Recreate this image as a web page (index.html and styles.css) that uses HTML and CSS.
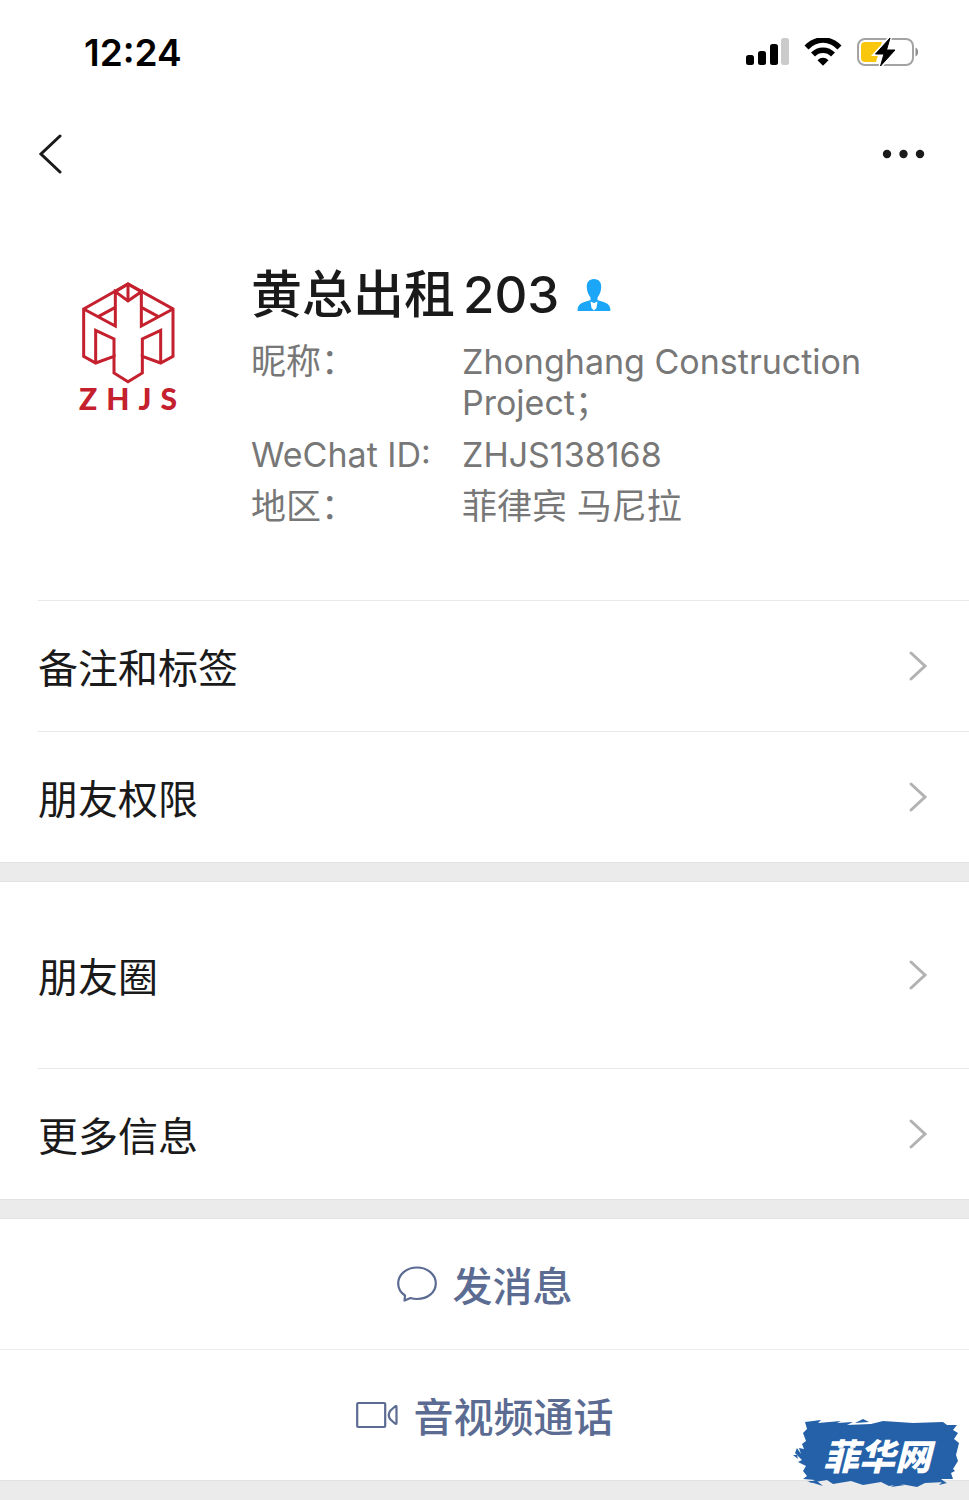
FILE: index.html
```html
<!DOCTYPE html>
<html lang="zh-CN">
<head>
    <meta charset="UTF-8">
    <meta name="viewport" content="width=device-width, initial-scale=1.0">
    <title>黄总出租203</title>
    <link rel="stylesheet" href="styles.css">
</head>
<body>
    <div class="page">
        <div class="status-bar">
            <span class="time">12:24</span>
            <div class="status-icons">
                <svg width="43" height="28" viewBox="0 0 43 28">
                    <rect x="0" y="17" width="8" height="10" rx="2.5"/>
                    <rect x="12" y="13" width="8" height="14" rx="2.5"/>
                    <rect x="24" y="6" width="8" height="21" rx="2.5"/>
                    <rect x="35" y="0" width="8" height="27" rx="2.5" fill="#cbcbcb"/>
                </svg>
                <svg width="38" height="28" viewBox="0 0 38 28">
                    <path d="M2.5 9.5C12 -.5 26 -.5 35.500 9.500" fill="none" stroke="#000" stroke-width="5.500"/>
                    <path d="M9 16.500C14.500 10.800 23.500 10.800 29 16.500" fill="none" stroke="#000" stroke-width="5.500"/>
                    <path d="M13.500 22.300C16.800 19 21.200 19 24.500 22.300L19 27.800Z"/>
                </svg>
                <svg width="62" height="30" viewBox="0 0 62 30">
                    <rect x="1" y="2" width="55" height="26" rx="7" fill="none" stroke="#a3a3a3" stroke-width="2"/>
                    <path d="M58.500 10.500C62 12 62 18 58.500 19.500Z" fill="#8f8f8f"/>
                    <path d="M8 5H25L19 25H8Q4 25 4 21V9Q4 5 8 5Z" fill="#f9c80e"/>
                    <path d="M33 1L18.500 17H27L23.500 29L38 13H29.500Z" stroke="#fff" stroke-width="4"/>
                    <path d="M33 1L18.500 17H27L23.500 29L38 13H29.500Z" stroke="#000" stroke-linejoin="round"/>
                </svg>
            </div>
        </div>

        <header class="nav">
            <button class="icon-button" aria-label="返回">
                <svg width="24" height="42" viewBox="0 0 24 42">
                    <path d="M22 3L3 21L22 39" fill="none" stroke="#1a1a1a" stroke-width="3" stroke-linecap="round"/>
                </svg>
            </button>
            <button class="icon-button" aria-label="更多">
                <svg width="44" height="12" viewBox="0 0 44 12">
                    <circle cx="5" cy="6" r="4.200" fill="#1a1a1a"/>
                    <circle cx="21.500" cy="6" r="4.200" fill="#1a1a1a"/>
                    <circle cx="38" cy="6" r="4.200" fill="#1a1a1a"/>
                </svg>
            </button>
        </header>

        <section class="profile">
            <div class="avatar">
                <svg width="100" height="104" viewBox="56 64 300 312">
                    <g fill="none" stroke="#c4202e" stroke-width="9">
                        <path d="M73 148L206 73L341 148V290L304 310L249 290V340L206 366L164 340V290L109 310L73 290Z"/>
                        <path d="M73 148L168 199V96L206 124L246 96V199L341 148"/>
                        <path d="M206 73V124M168 96L206 73L246 96"/>
                        <path d="M118 170L168 143M296 170L246 143"/>
                        <path d="M109 310V212L164 238V292M304 310V212L249 238V292"/>
                    </g>
                </svg>
                <div class="logo-text"><span>Z</span><span>H</span><span>J</span><span>S</span></div>
            </div>
            <div class="info">
                <h1 class="name">
                    <span>黄总出租</span>
                    <span>203</span>
                    <svg class="person" width="34" height="34" viewBox="0 0 34 34">
                        <path d="M17 1C22 1 24.500 4.500 24.200 9.500C24 14 22 17.500 20.500 19.500V22C25 24 33 24 33.500 32Q33.500 33 32.500 33H1.500Q.5 33 .5 32C1 24 9 24 13.500 22V19.500C12 17.500 10 14 9.800 9.500C9.500 4.500 12 1 17 1Z" fill="#1ba6f8"/>
                        <path d="M13.500 23.500L17 25L20.500 23.500L19.500 30L17 32.500L14.500 30Z" fill="#fff"/>
                    </svg>
                </h1>
                <dl class="details">
                    <dt class="zh">昵称：</dt>
                    <dd>Zhonghang Construction Project；</dd>
                    <dt>WeChat ID:</dt>
                    <dd>ZHJS138168</dd>
                    <dt class="zh">地区：</dt>
                    <dd class="zh">菲律宾 马尼拉</dd>
                </dl>
            </div>
        </section>

        <nav class="menu">
            <a class="row" href="#">
                <span>备注和标签</span>
                <svg width="20" height="34" viewBox="0 0 20 34"><path d="M3 4L17 17L3 30"/></svg>
            </a>
            <a class="row" href="#">
                <span>朋友权限</span>
                <svg width="20" height="34" viewBox="0 0 20 34"><path d="M3 4L17 17L3 30"/></svg>
            </a>
        </nav>

        <nav class="menu second">
            <a class="row tall" href="#">
                <span>朋友圈</span>
                <svg width="20" height="34" viewBox="0 0 20 34"><path d="M3 4L17 17L3 30"/></svg>
            </a>
            <a class="row" href="#">
                <span>更多信息</span>
                <svg width="20" height="34" viewBox="0 0 20 34"><path d="M3 4L17 17L3 30"/></svg>
            </a>
        </nav>

        <div class="actions">
            <button class="action">
                <svg width="40" height="38" viewBox="0 0 40 38">
                    <path d="M8 30.500C3.500 27.500 1.200 23.500 1.200 18.500C1.200 9.500 9.500 2.500 20 2.500S38.800 9.500 38.800 18.500S30.500 34 20 34C17.500 34 15.500 33.700 13.500 33L7.500 35.500Z" fill="none" stroke="#5b6b92" stroke-width="2.200" stroke-linejoin="round"/>
                </svg>
                <span>发消息</span>
            </button>
            <button class="action video">
                <svg width="42" height="28" viewBox="0 0 42 28">
                    <g fill="none" stroke="#5b6b92" stroke-width="2.200" stroke-linejoin="round">
                        <rect x="1.200" y="2" width="28" height="24" rx="1"/>
                        <path d="M40.500 6V22C40.500 23 39.800 23 39 22.500L34.500 18.500Q31 14 34.500 9.500L39 5.500C39.800 5 40.500 5 40.500 6Z"/>
                    </g>
                </svg>
                <span>音视频通话</span>
            </button>
        </div>

        <div class="watermark">
            <svg class="brush" viewBox="0 0 168 70" preserveAspectRatio="none">
                <path d="M12 3L28 1L25 4L48 2L44 4L60 3L54 6L78 5L90 2L120 4L150 3L154 6L164 6L160 11L165 14L161 20L166 24L163 36L165 42L160 50L162 52L158 54L160 60L148 60L152 63L132 64L124 68L108 65L96 67L88 63L70 66L58 62L40 65L34 61L16 64L22 61L10 60L14 57L10 52L13 47L5 43L9 41L2 34L4 29L8 35L6 29L11 30L9 25L13 22L10 14L14 10Z" fill="#2461a8"/>
                <path d="M14 62L30 67L24 62M70 0L76 3L62 4M98 68L112 66L104 64M154 64L146 66L150 62M0 36L5 40L4 36" fill="#2461a8"/>
            </svg>
            <span>菲华网</span>
        </div>
    </div>
</body>
</html>
```
FILE: styles.css
```css
* {
    box-sizing: border-box;
}

body {
    margin: 0;
    background-color: #ebebeb;
    color: #1a1a1a;
    font-family: Inter, "Noto Sans CJK SC", sans-serif;
}

svg {
    display: block;
    flex-shrink: 0;
}

button {
    border: none;
    background: none;
    padding: 0;
    font-family: inherit;
    cursor: pointer;
}

.page {
    position: relative;
    min-height: 100vh;
}

.status-bar {
    display: flex;
    justify-content: space-between;
    align-items: center;
    height: 104px;
    padding: 0 50px 0 84px;
    background-color: #fff;
    color: #000;
}

.time {
    font-size: 37px;
    font-weight: 600;
}

.status-icons {
    display: flex;
    align-items: center;
    gap: 15px;
}

.nav {
    display: flex;
    justify-content: space-between;
    align-items: center;
    height: 100px;
    padding: 0 43px 0 38px;
    background-color: #fff;
}

.profile {
    display: flex;
    gap: 33px;
    padding: 53px 60px 73px 38px;
    background-color: #fff;
}

.avatar {
    display: flex;
    flex-direction: column;
    align-items: center;
    flex-shrink: 0;
    width: 180px;
    height: 180px;
    padding-top: 24px;
}

.logo-text {
    display: flex;
    justify-content: space-between;
    width: 98px;
    color: #c4202e;
    font-family: Lato, sans-serif;
    font-size: 30px;
    font-weight: 900;
    line-height: 26px;
}

.info {
    flex: 1;
}

.name {
    display: flex;
    align-items: center;
    gap: 8px;
    margin: 0 0 8px;
    font-size: 51px;
    font-weight: 500;
    line-height: 76px;
}

.person {
    margin-left: 10px;
}

.details {
    display: grid;
    grid-template-columns: 178px 1fr;
    gap: 11px 33px;
    margin: 0;
    color: #777;
    font-size: 34px;
    line-height: 41px;
}

.details dt {
    white-space: nowrap;
}

.details dd {
    margin: 0;
}

.details .zh {
    font-size: 35px;
}

.menu {
    padding-left: 38px;
    background-color: #fff;
    border-bottom: 1px solid #e2e2e2;
}

.row {
    display: flex;
    justify-content: space-between;
    align-items: center;
    height: 131px;
    padding-right: 41px;
    border-top: 1px solid #e8e8e8;
    color: #1a1a1a;
    font-size: 40px;
    text-decoration: none;
}

.row path {
    fill: none;
    stroke: #b2b2b2;
    stroke-width: 3;
    stroke-linecap: round;
}

.second {
    margin-top: 18px;
    border-top: 1px solid #e2e2e2;
}

.tall {
    height: 186px;
    border-top: none;
}

.actions {
    margin-top: 18px;
    border-top: 1px solid #e2e2e2;
    border-bottom: 1px solid #e2e2e2;
    background-color: #fff;
}

.action {
    display: flex;
    justify-content: center;
    align-items: center;
    gap: 16px;
    width: 100%;
    height: 130px;
    color: #5b6b92;
    font-size: 40px;
    font-weight: 500;
}

.video {
    height: 131px;
    border-top: 1px solid #ececec;
}

.watermark {
    position: absolute;
    right: 8px;
    bottom: 11px;
    display: flex;
    justify-content: center;
    align-items: center;
    width: 168px;
    height: 70px;
    color: #fff;
    font-size: 36px;
    font-style: italic;
    font-weight: 900;
}

.brush {
    position: absolute;
    width: 100%;
    height: 100%;
}

.watermark span {
    position: relative;
}
```
